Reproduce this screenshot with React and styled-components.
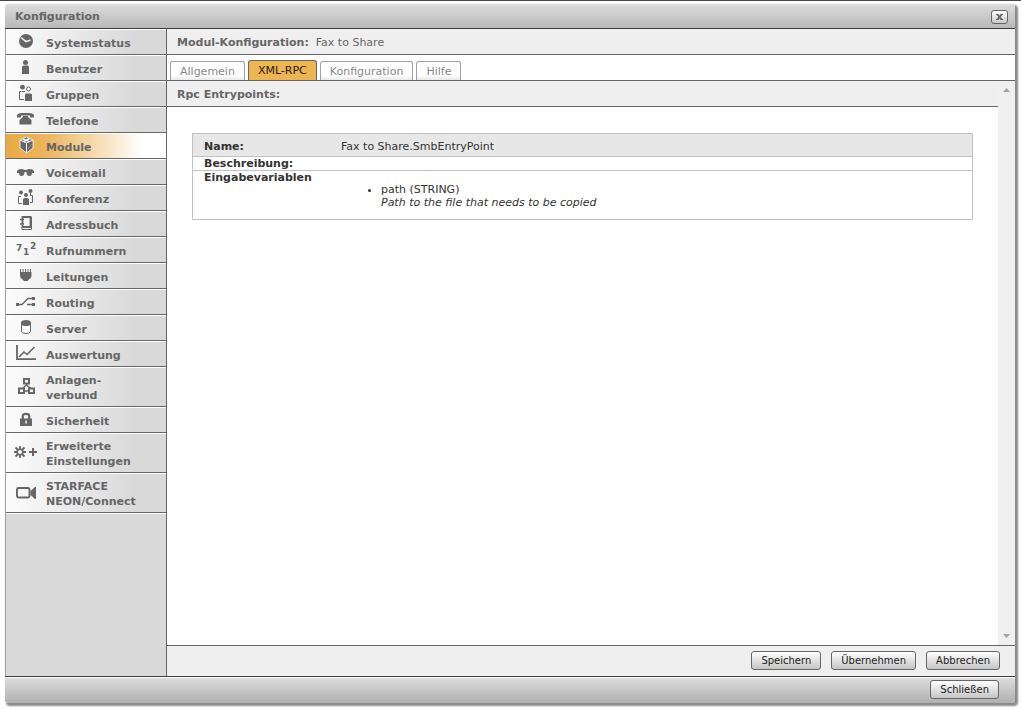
import React from "react";
import styled, { createGlobalStyle } from "styled-components";

const GlobalStyle = createGlobalStyle`
  *, *::before, *::after { box-sizing: border-box; }
  body {
    margin: 0;
    background: #fff;
    color: #333;
    font: 11px/13px Verdana, "DejaVu Sans", sans-serif;
  }
`;

const Page = styled.div`
  display: flex;
  flex-direction: column;
  min-height: 100vh;
  padding: 3px 6px 6px 5px;
  border-top: 1px solid #4a474a;
`;

const Window = styled.section`
  flex: 1;
  display: flex;
  flex-direction: column;
  border-radius: 3px;
  box-shadow: 2px 2px 2px 1px #8a8a8a;
`;

const TitleBar = styled.header`
  display: flex;
  align-items: center;
  justify-content: space-between;
  height: 25px;
  padding: 1px 7px 0 10px;
  border-bottom: 1px solid #3c3a3c;
  border-radius: 3px 3px 0 0;
  background: linear-gradient(#dcdcdc, #b8b8b8);
`;

const Title = styled.h1`
  margin: 0;
  font-size: 11px;
  color: #666;
`;

const CloseButton = styled.button`
  display: flex;
  align-items: center;
  justify-content: center;
  width: 17px;
  height: 14px;
  padding: 0;
  border: 1px solid #666;
  border-radius: 3px;
  background: linear-gradient(#fff, #c8c8c8);
`;

const Body = styled.div`
  flex: 1;
  display: flex;
`;

const Sidebar = styled.nav`
  flex: none;
  width: 162px;
  border-left: 1px solid #a0a0a0;
  border-right: 1px solid #666;
  background: #d9d9d9;
`;

const NavList = styled.ul`
  margin: 0;
  padding: 0;
  list-style: none;
  box-shadow: 0 1px 0 #fff;
`;

const NavLink = styled.a`
  display: flex;
  align-items: center;
  gap: 7px;
  height: ${(p) => (p.$tall ? 40 : 26)}px;
  padding: 0 0 1px 7px;
  border-bottom: 1px solid #666;
  box-shadow: inset 0 1px 0 #fff;
  background: ${(p) =>
    p.$active
      ? "linear-gradient(90deg, #e8aa44, #ebb55d 25%, #fff 85%)"
      : "linear-gradient(90deg, #fcfcfc, #d9d9d9 80%)"};
  color: #666;
  font-weight: bold;
  line-height: 15px;
  text-decoration: none;
  white-space: pre-line;

  svg { flex: none; overflow: visible; }
  span { padding-top: 4px; }
`;

const Main = styled.main`
  flex: 1;
  min-width: 0;
  display: flex;
  flex-direction: column;
  background: #fff;
`;

const Bar = styled.h2`
  display: flex;
  align-items: center;
  gap: 7px;
  height: 26px;
  margin: 0;
  padding: 2px 10px 0;
  border-bottom: 1px solid #666;
  background: #efefef;
  color: #666;
  font-size: 11px;
`;

const BarValue = styled.span`
  font-weight: normal;
`;

const Tabs = styled.div`
  display: flex;
  align-items: flex-end;
  gap: 3px;
  height: 26px;
  padding: 0 3px;
  border-bottom: 1px solid #666;
`;

const Tab = styled.button`
  height: ${(p) => (p.$active ? 20 : 19)}px;
  padding: 0 9px;
  border: 1px solid ${(p) => (p.$active ? "#666" : "#a0a0a0")};
  border-bottom: 0;
  border-radius: 3px 3px 0 0;
  background: ${(p) => (p.$active ? "#efb550" : "linear-gradient(#fff 75%, #e8e8e8)")};
  color: ${(p) => (p.$active ? "#222" : "#888")};
  font: inherit;
`;

const ScrollArea = styled.div`
  flex: 1;
  display: flex;
`;

const Content = styled.div`
  flex: 1;
  min-width: 0;
`;

const ScrollBar = styled.div`
  flex: none;
  display: flex;
  flex-direction: column;
  align-items: center;
  justify-content: space-between;
  width: 17px;
  padding: 6px 0;
  background: #f0f0f0;
`;

const TableWrap = styled.div`
  padding: 26px 25px;
`;

const Table = styled.table`
  width: 100%;
  border-collapse: separate;
  border-spacing: 0;
  border: 1px solid #c2c2c2;
  border-bottom: 0;

  th, td {
    padding: 0;
    border-bottom: 1px solid #c2c2c2;
    text-align: left;
    vertical-align: top;
  }
  th { width: 148px; padding-left: 11px; }
`;

const Row = styled.tr`
  height: ${(p) => (p.$head ? 23 : 14)}px;
  background: ${(p) => (p.$head ? "#e7e7e7" : "#fff")};

  && > * { padding-top: ${(p) => (p.$head ? 6 : 0)}px; }
`;

const Params = styled.ul`
  margin: 12px 0 10px;
  padding-left: 40px;
`;

const Actions = styled.div`
  display: flex;
  align-items: center;
  justify-content: flex-end;
  gap: 10px;
  height: 31px;
  padding: 0 15px 1px;
  border-top: 1px solid #666;
  background: #efefef;
`;

const Footer = styled.footer`
  display: flex;
  align-items: center;
  justify-content: flex-end;
  height: 27px;
  padding: 0 16px 1px;
  border-top: 1px solid #3c3a3c;
  border-radius: 0 0 3px 3px;
  background: linear-gradient(#dedede, #b0b0b0);
  box-shadow: inset 0 1px 0 #fff;
`;

const Button = styled.button`
  height: 19px;
  padding: 0 9px;
  border: 1px solid #666;
  border-radius: 3px;
  background: linear-gradient(#fff, #c4c4c4);
  color: #222;
  font: inherit;
  font-size: 10px;
`;

const G = "#666";

const icons = {
  clock: (
    <>
      <circle cx="13" cy="9" r="7" fill={G} />
      <path d="M8 5.500l5 4.200 4.500-1.700" fill="none" stroke="#f4f4f4" strokeWidth="1.600" />
    </>
  ),
  user: (
    <>
      <circle cx="12.500" cy="4.500" r="2.500" fill={G} />
      <path d="M9 9q0-1.500 1.500-1.500h4q1.500 0 1.500 1.500v7H9z" fill={G} />
    </>
  ),
  group: (
    <>
      <circle cx="9.500" cy="3.200" r="2.400" fill={G} />
      <circle cx="15.500" cy="5" r="2" fill="#fff" stroke={G} />
      <path d="M8.500 7.500h-2v8H11M9 7.500h3" fill="none" stroke={G} />
      <path d="M12 11q0-1.500 1.500-1.500h4q1.500 0 1.500 1.500v6h-7z" fill={G} />
    </>
  ),
  phone: (
    <>
      <path d="M4 7.500V5q1-2 5-2h7q4 0 5 2v2.500h-4V5.500H8v2z" fill={G} />
      <path d="M10 6h5v1l3.500 3v4.500h-12V10L10 7z" fill={G} />
    </>
  ),
  cube: (
    <>
      <path d="M13.500 1L20 4v8l-6.500 5L7 12V4z" fill={G} stroke="#fff" strokeWidth=".8" />
      <path d="M7 4l6.500 3L20 4M13.500 7v9.500" fill="none" stroke="#fff" />
      <path d="M10 3.200l6.500 2.500M16.500 2.500L10.500 5.500" stroke="#fff" strokeWidth="1.400" />
      <path d="M15 13l3.500-5" stroke="#999" />
    </>
  ),
  voicemail: (
    <path
      d="M4 9q1-2 4-2 2 0 4 1h1q2-1 4-1 3 0 4 2v2h-2q0 3-2.500 3-3 0-3-4h-2q0 4-3 4Q6 14 6 11H4z"
      fill={G}
    />
  ),
  conference: (
    <>
      <circle cx="8" cy="4.500" r="2" fill={G} />
      <circle cx="17.500" cy="3" r="2" fill={G} />
      <circle cx="13" cy="7" r="2" fill={G} />
      <path d="M8 8.500H5.500v7H9M17 7.500h2.500v7H17M17.500 5v2.500" fill="none" stroke={G} />
      <path d="M10 12q0-2 2-2h2q2 0 2 2v5h-6z" fill={G} />
    </>
  ),
  book: (
    <>
      <path d="M9.500 5V3h8v10h-8v-2M9.500 6v4" fill="none" stroke={G} strokeWidth="1.800" />
      <path d="M7 5.500h4M7 10h4" stroke={G} strokeWidth="1.600" />
      <path d="M9 13v2.500h9.500V3" fill="none" stroke={G} />
    </>
  ),
  numbers: (
    <g fill={G} fontFamily="Verdana, DejaVu Sans, sans-serif" fontWeight="bold" fontSize="9">
      <text x="3" y="11">7</text>
      <text x="10" y="15">1</text>
      <text x="17" y="9">2</text>
    </g>
  ),
  plug: (
    <>
      <path d="M7.500 3v4M10 3v4M12.500 3v4M15 3v4M17.500 3v4" stroke={G} />
      <path d="M7 6h11.500v4q0 2-2 3l-2 2h-3.500l-2-2q-2-1-2-3z" fill={G} />
    </>
  ),
  routing: (
    <>
      <path d="M5 12.500h4l6-6h5M14 12.500h6" fill="none" stroke={G} strokeWidth="1.400" />
      <path d="M3 11h3v3H3zM19 5h3v3h-3zM19 11h3v3h-3z" fill={G} />
    </>
  ),
  server: (
    <>
      <path d="M8.500 4.500v9q1 2 4.500 2t4.500-2v-9" fill="#fff" fillOpacity=".5" stroke={G} />
      <path d="M8 4q1-2 5-2t5 2v2q-1 2-5 2T8 6z" fill={G} />
    </>
  ),
  chart: (
    <>
      <path d="M4 1v14.200h19" fill="none" stroke={G} strokeWidth="1.800" />
      <path d="M6 13l5-5 3 2.500L21.500 3" fill="none" stroke={G} strokeWidth="1.600" />
    </>
  ),
  network: (
    <>
      <path d="M13.500 6v3M13.500 8L9 12M13.500 8l5 4M11 14h5" stroke={G} strokeWidth="1.600" />
      <path d="M11 2h5v4.500h-5zM6 11.500h5V16H6zM16 11.500h5V16h-5z" fill="#f4f4f4" stroke={G} strokeWidth="2" />
    </>
  ),
  lock: (
    <>
      <path d="M9.800 9V6q0-2.200 3.200-2.200T16.200 6v3" fill="none" stroke={G} strokeWidth="2.200" />
      <path d="M7 8.500h12V16H7z" fill={G} />
      <path d="M12.300 10.500h1.500v3h-1.500z" fill="#f4f4f4" />
    </>
  ),
  gear: (
    <>
      <path d="M7 3v3M7 12v3M1 9h3M10 9h3M2.500 4.500L5 7M9 11l2.500 2.500M11.500 4.500L9 7M5 11l-2.500 2.500" stroke={G} strokeWidth="1.800" />
      <circle cx="7" cy="9" r="2.800" fill="#f8f8f8" stroke={G} strokeWidth="1.600" />
      <path d="M20 5v8M16 9h8" stroke={G} strokeWidth="2" />
    </>
  ),
  camera: (
    <>
      <rect x="4" y="5" width="12.500" height="9.500" rx="1.500" fill="none" stroke={G} strokeWidth="1.900" />
      <path d="M17.500 8L22 4h1v12h-1l-4.500-4z" fill={G} />
    </>
  ),
};

const Icon = ({ name }) => (
  <svg width="26" height="18" viewBox="0 0 26 18" aria-hidden="true">
    {icons[name]}
  </svg>
);

const navItems = [
  ["Systemstatus", "clock"],
  ["Benutzer", "user"],
  ["Gruppen", "group"],
  ["Telefone", "phone"],
  ["Module", "cube"],
  ["Voicemail", "voicemail"],
  ["Konferenz", "conference"],
  ["Adressbuch", "book"],
  ["Rufnummern", "numbers"],
  ["Leitungen", "plug"],
  ["Routing", "routing"],
  ["Server", "server"],
  ["Auswertung", "chart"],
  ["Anlagen-\nverbund", "network"],
  ["Sicherheit", "lock"],
  ["Erweiterte\nEinstellungen", "gear"],
  ["STARFACE\nNEON/Connect", "camera"],
];

const tabs = ["Allgemein", "XML-RPC", "Konfiguration", "Hilfe"];

export default function App() {
  return (
    <>
      <GlobalStyle />
      <Page>
        <Window>
          <TitleBar>
            <Title>Konfiguration</Title>
            <CloseButton type="button" aria-label="Fenster schließen">
              <svg width="9" height="6" viewBox="0 0 9 6" aria-hidden="true">
                <path d="M2 0l5 6M7 0L2 6" stroke={G} strokeWidth="1.800" />
                <path d="M1 .5h2.500M5.500 .5H8M1 5.500h2.500M5.500 5.500H8" stroke={G} />
              </svg>
            </CloseButton>
          </TitleBar>
          <Body>
            <Sidebar>
              <NavList>
                {navItems.map(([label, icon]) => (
                  <li key={label}>
                    <NavLink href="#" $tall={label.includes("\n")} $active={label === "Module"}>
                      <Icon name={icon} />
                      <span>{label}</span>
                    </NavLink>
                  </li>
                ))}
              </NavList>
            </Sidebar>
            <Main>
              <Bar>
                Modul-Konfiguration: <BarValue>Fax to Share</BarValue>
              </Bar>
              <Tabs role="tablist">
                {tabs.map((t) => (
                  <Tab key={t} type="button" role="tab" aria-selected={t === "XML-RPC"} $active={t === "XML-RPC"}>
                    {t}
                  </Tab>
                ))}
              </Tabs>
              <ScrollArea>
                <Content>
                  <Bar>Rpc Entrypoints:</Bar>
                  <TableWrap>
                    <Table>
                      <tbody>
                        <Row $head>
                          <th scope="row">Name:</th>
                          <td>Fax to Share.SmbEntryPoint</td>
                        </Row>
                        <Row>
                          <th scope="row">Beschreibung:</th>
                          <td />
                        </Row>
                        <Row>
                          <th scope="row">Eingabevariablen</th>
                          <td>
                            <Params>
                              <li>
                                path (STRING)
                                <br />
                                <em>Path to the file that needs to be copied</em>
                              </li>
                            </Params>
                          </td>
                        </Row>
                      </tbody>
                    </Table>
                  </TableWrap>
                </Content>
                <ScrollBar aria-hidden="true">
                  <svg width="7" height="5" viewBox="0 0 7 5">
                    <path d="M0 5l3.500-4L7 5z" fill="#a3a3a3" />
                  </svg>
                  <svg width="7" height="5" viewBox="0 0 7 5">
                    <path d="M0 0l3.500 4L7 0z" fill="#a3a3a3" />
                  </svg>
                </ScrollBar>
              </ScrollArea>
              <Actions>
                <Button type="button">Speichern</Button>
                <Button type="button">Übernehmen</Button>
                <Button type="button">Abbrechen</Button>
              </Actions>
            </Main>
          </Body>
          <Footer>
            <Button type="button">Schließen</Button>
          </Footer>
        </Window>
      </Page>
    </>
  );
}
